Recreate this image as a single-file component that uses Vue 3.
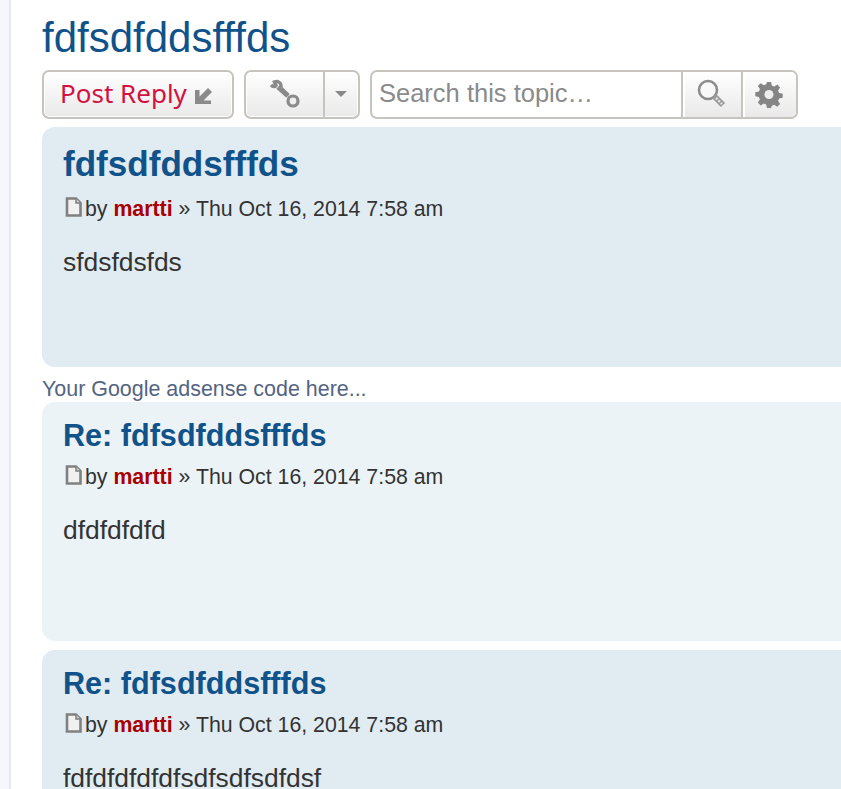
<template>
  <div class="page">
    <main class="wrap">
      <h2 class="topic-title">fdfsdfddsfffds</h2>

      <div class="action-bar">
        <a class="button reply">
          <span>Post Reply</span>
          <svg class="ico" width="22" height="20" viewBox="0 0 22 20"><path d="M2 4h4.500v6.500L15 2l4 4-8.500 8.500H18V18H2z" fill="#8a8a8a" /></svg>
        </a>

        <div class="button tools">
          <div class="tools-main">
            <svg class="ico-soft" width="34" height="32" viewBox="0 0 34 32">
              <path d="M3 6c2 2 4 2 5 .5L6.500 3c3-1 6 0 6.500 3 .2 1-.2 2-.5 2.500L20 16" fill="none" stroke="#8a8a8a" stroke-width="3.500" />
              <path d="M10 8l10 9" stroke="#8a8a8a" stroke-width="5" />
              <circle cx="25" cy="22" r="5" fill="#efefef" stroke="#8a8a8a" stroke-width="3.200" />
            </svg>
          </div>
          <div class="tools-caret"><i></i></div>
        </div>

        <div class="search">
          <input class="search-input" type="text" placeholder="Search this topic…" />
          <div class="search-btn">
            <svg class="ico-soft" width="32" height="32" viewBox="0 0 32 32">
              <circle cx="12" cy="11" r="9" fill="#f8f8f8" stroke="#8c8c8c" stroke-width="2.600" />
              <path d="M18 17l9 9" stroke="#9a9a9a" stroke-width="6" />
              <path d="M20 19l6 6" stroke="#e6e6e6" stroke-width="2.500" stroke-dasharray="2 1.500" />
            </svg>
          </div>
          <div class="search-btn gear">
            <svg class="ico-soft" width="30" height="30" viewBox="0 0 30 30">
              <path d="M13 2h4l.8 3.600 2.400 1 3.100-2 2.800 2.800-2 3.100 1 2.400 3.600.8v4l-3.600.8-1 2.400 2 3.100-2.800 2.800-3.100-2-2.400 1L17 28h-4l-.8-3.600-2.400-1-3.100 2-2.800-2.800 2-3.100-1-2.400L1.300 16.300v-4l3.600-.8 1-2.400-2-3.100 2.800-2.800 3.100 2 2.400-1z" fill="#858585" />
              <circle cx="15" cy="14.500" r="4.500" fill="#efefef" />
            </svg>
          </div>
        </div>
      </div>

      <template v-for="(p, i) in posts" :key="p.id">
        <div v-if="i === 1" class="ad">Your Google adsense code here...</div>
        <article class="post" :class="[p.tone, { first: i === 0 }]">
          <h3 class="post-title" :class="{ big: i === 0 }">{{ p.title }}</h3>
          <p class="author">
            <svg class="doc ico-soft" width="17" height="20" viewBox="0 0 17 20">
              <path d="M2 1.500h9l4.500 4.500v12.500H2z" fill="#f1f1f1" stroke="#808080" stroke-width="2.600" />
              <path d="M11 1.500V6h4.500" fill="#ccc" stroke="#808080" stroke-width="1.500" />
            </svg>by <b class="user">martti</b> » Thu Oct 16, 2014 7:58 am
          </p>
          <p class="content">{{ p.body }}</p>
        </article>
      </template>
    </main>
  </div>
</template>

<script setup>
const posts = [
  { id: 1, tone: 'bg2', title: 'fdfsdfddsfffds', body: 'sfdsfdsfds' },
  { id: 2, tone: 'bg1', title: 'Re: fdfsdfddsfffds', body: 'dfdfdfdfd' },
  { id: 3, tone: 'bg2', title: 'Re: fdfsdfddsfffds', body: 'fdfdfdfdfdfsdfsdfsdfdsf' },
]
</script>

<style scoped>
.page{height:789px;overflow:hidden;background:#f5f7fa;font-family:"Liberation Sans",Arial,sans-serif}
.wrap{margin-left:9px;height:789px;width:960px;box-sizing:border-box;background:#fff;border-left:2px solid #e6e9ed;padding-left:31px}

.topic-title{margin:0;padding-top:15px;height:55px;font-size:42px;line-height:46px;font-weight:400;color:#105289}

.action-bar{display:flex;align-items:stretch;height:49px;margin-bottom:8px}
.button{box-sizing:border-box;height:49px;border:2px solid #c7c3bf;border-radius:7px;background:linear-gradient(#fff,#e9e9e9);box-shadow:inset 0 0 0 1px #fff}
.reply{width:192px;display:flex;align-items:center;padding:0 0 4px 16px;font-family:"Noto Sans","Open Sans",sans-serif;font-size:26px;color:#d31141;gap:6px}
.ico{margin-top:7px;filter:blur(.5px)}
.ico-soft{filter:blur(.5px)}
.tools{width:116px;margin-left:10px;display:flex}
.tools-main{width:77px;display:flex;align-items:center;justify-content:center;border-right:2px solid #c7c3bf}
.tools-caret{flex:1;display:flex;align-items:center;justify-content:center;padding-right:2px}
.tools-caret i{width:0;height:0;margin-top:-1px;border:6px solid transparent;border-top:6px solid #8a8a8a;border-bottom:0}

.search{box-sizing:border-box;width:428px;height:49px;margin-left:10px;display:flex;border:2px solid #c7c3bf;border-radius:7px;background:#fff;overflow:hidden}
.search-input{box-sizing:border-box;width:309px;height:43px;border:0;outline:0;padding:0 0 0 7px;background:transparent;font-family:"Liberation Sans",Arial,sans-serif;font-size:25.5px;color:#333}
.search-input::placeholder{color:#8a8a8a;opacity:1}
.search-btn{width:59px;display:flex;align-items:center;justify-content:center;border-left:2px solid #c7c3bf;background:linear-gradient(#fff,#e9e9e9);box-shadow:inset 2px 0 0 #fff}
.gear{width:54px}

.post{box-sizing:border-box;width:900px;padding:0 0 0 21px;border-radius:13px}
.bg1{background:#ecf3f7}
.bg2{background:#e1ebf2}
.post.first{height:240px;padding-top:17px;margin-bottom:11px}
.post:not(.first){height:239px;padding-top:14px;margin-bottom:9px}

.post-title{margin:0;font-size:30.6px;line-height:38px;font-weight:700;color:#105289}
.post-title.big{font-size:35.1px;line-height:40px}
.author{margin:7px 0 0;height:36px;display:block;font-size:21.3px;line-height:37px;color:#333}
.post:not(.first) .author{margin-top:5px}
.doc{vertical-align:-1px;margin:0 3px 0 2px}
.user{color:#aa0000}
.content{margin:19px 0 0;font-size:26.4px;line-height:32px;color:#333}

.ad{height:24px;margin-bottom:1px;margin-top:-1px;font-size:21.45px;line-height:24px;color:#536482}
</style>
